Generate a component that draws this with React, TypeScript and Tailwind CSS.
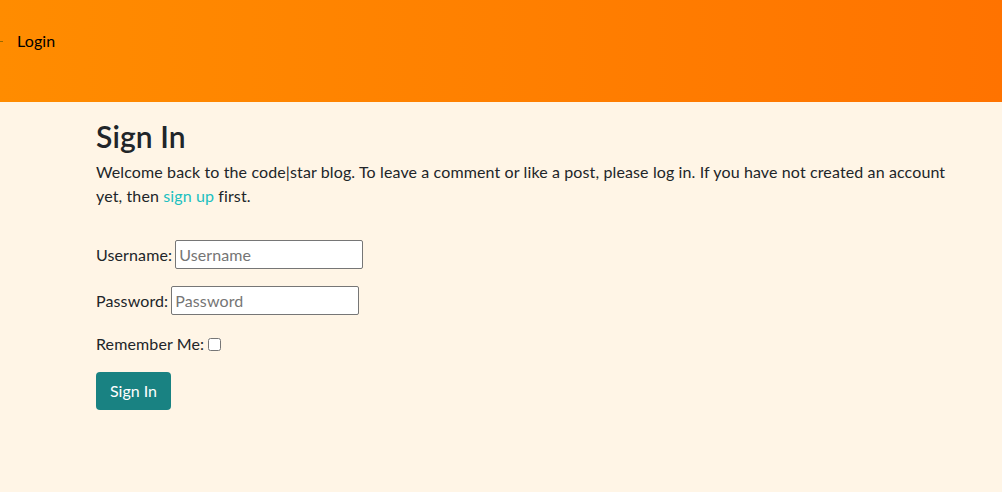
import React from 'react';

const App: React.FC = () => {
  return (
    <div className="min-h-[492px] bg-[#fff5e6] text-[#212529] font-['Lato','Noto_Sans',sans-serif] tracking-[0.12px]">
      {/* Header */}
      <header className="h-[102px] bg-gradient-to-r from-[#ff8c00] to-[#ff7300] pt-[29px]">
        <div className="flex items-center h-6">
          <span className="w-[3px] h-[1px] bg-[#9a6a00]" />
          <span className="ml-[14px] text-base leading-6 text-black">Login</span>
        </div>
      </header>

      {/* Sign in */}
      <main className="pl-[96px] pr-[40px] pt-[16px]">
        <h2 className="text-[30px] font-semibold leading-[36px] mb-[6px]">Sign In</h2>
        <p className="text-base leading-6 max-w-[870px]">
          Welcome back to the code|star blog. To leave a comment or like a post, please log in. If you have not created an account
          yet, then <a className="text-[#20c0c0]">sign up</a> first.
        </p>

        <form className="mt-[32px] flex flex-col">
          <div className="flex items-center gap-[3px] h-[29px]">
            <label className="text-base">Username:</label>
            <input
              type="text"
              placeholder="Username"
              className="w-[188px] h-[29px] bg-white border border-[#767676] rounded-[2px] px-[3px] text-base placeholder:text-[#757575]"
            />
          </div>
          <div className="flex items-center gap-[3px] h-[29px] mt-[17px]">
            <label className="text-base">Password:</label>
            <input
              type="password"
              placeholder="Password"
              className="w-[188px] h-[29px] bg-white border border-[#767676] rounded-[2px] px-[3px] text-base placeholder:text-[#757575]"
            />
          </div>
          <div className="flex items-center gap-[4px] mt-[17px]">
            <label className="text-base">Remember Me:</label>
            <input type="checkbox" className="w-[13px] h-[13px]" />
          </div>
          <div className="mt-[16px]">
            <button type="button" className="bg-[#198282] text-white text-base tracking-normal w-[75px] h-[38px] rounded-[4px]">
              Sign In
            </button>
          </div>
        </form>
      </main>
    </div>
  );
};

export default App;
